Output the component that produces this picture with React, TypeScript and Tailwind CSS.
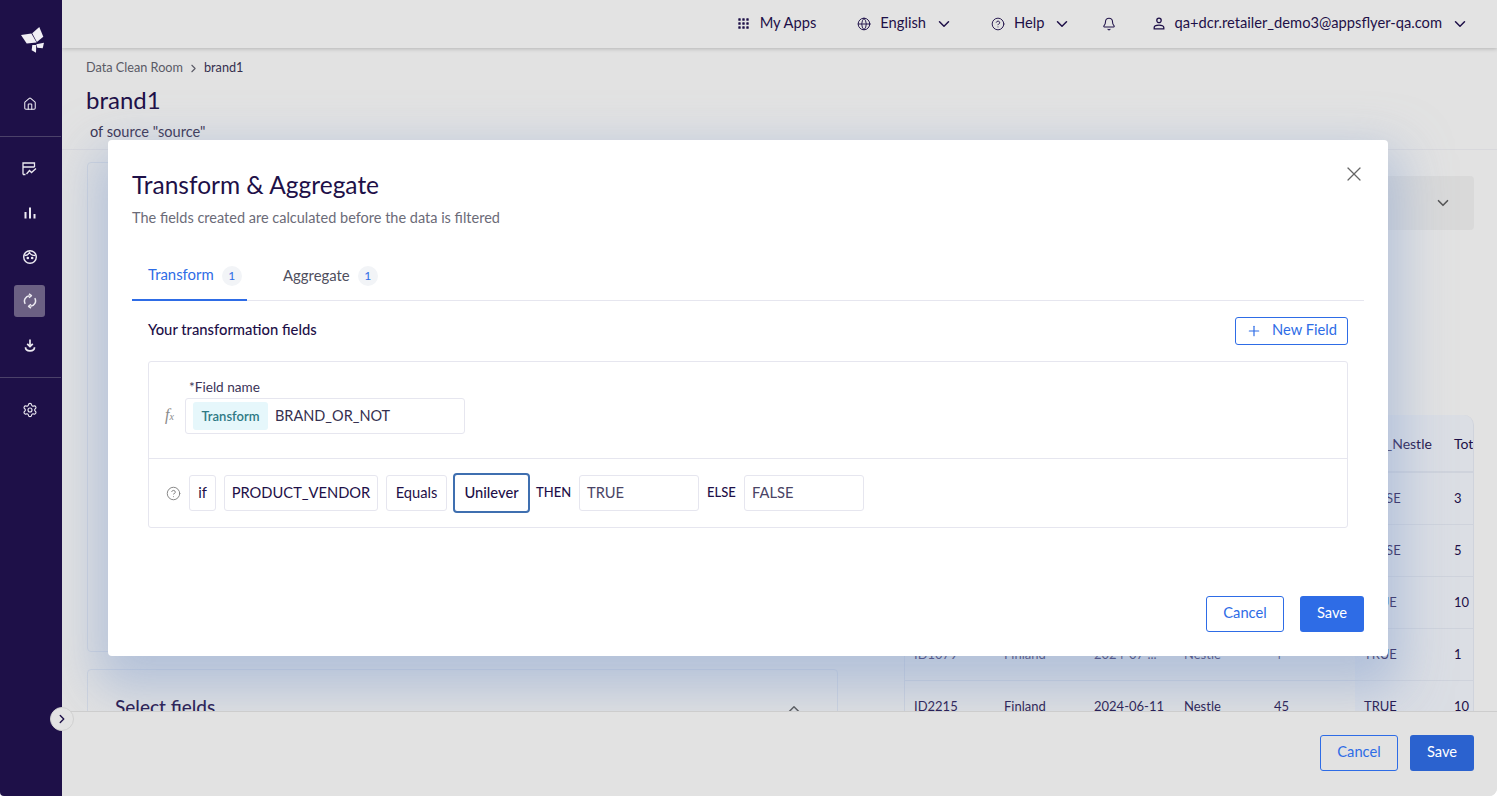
import React from "react";
import { Bell, ChevronDown, ChevronRight, ChevronUp, CircleHelp, Globe, House, Plus, Settings, X } from "lucide-react";

const font = { fontFamily: 'Lato, "Noto Sans", sans-serif' };

function Logo() {
  return (
    <svg width="24" height="27" viewBox="0 0 24 27" fill="#f1eff5">
      <path d="M0 8 L10.4 6.4 L15.6 15.4 L5.7 16.4 Z" />
      <path d="M18.3 0 L22.3 9.7 L15.9 15 L11.2 6.2 Z" />
      <path d="M15.3 17.3 L23 15.7 L21.7 21.3 L16.3 20.7 Z" />
      <path d="M11.3 18 L15.2 18 L15 25.7 L10.7 23.3 Z" />
    </svg>
  );
}

function Face() {
  return (
    <svg width="16" height="16" viewBox="0 0 16 16" fill="none" stroke="#eceaf1" strokeWidth="1.4">
      <circle cx="8" cy="8" r="6.3" />
      <path d="M2.5 6.5 C5 6.5 6.5 5.5 7.5 3.5 C8.5 5.5 11 6.5 13.5 6.5" />
      <circle cx="5.8" cy="9" r="0.6" fill="#eceaf1" />
      <circle cx="10.2" cy="9" r="0.6" fill="#eceaf1" />
    </svg>
  );
}

function Trend() {
  return (
    <svg width="15" height="14" viewBox="0 0 15 14" fill="none" stroke="#eceaf1" strokeWidth="1.3">
      <path d="M1 12.5 V1 H12.5 V5 M1 5 H12.5 M1 12.5 H3.5" />
      <path d="M4.5 12 L7.5 8.5 L9.5 10.5 L14 6.5" />
    </svg>
  );
}

function Bars() {
  return (
    <svg width="12" height="12" viewBox="0 0 12 12" fill="#eceaf1">
      <rect x="0.5" y="5" width="2" height="6.5" />
      <rect x="5" y="0.5" width="2" height="11" />
      <rect x="9.5" y="7" width="2" height="4.5" />
    </svg>
  );
}

function Sync() {
  return (
    <svg width="14" height="16" viewBox="0 0 14 16" fill="none" stroke="#eceaf1" strokeWidth="1.5">
      <path d="M2.2 10.8 A5.4 5.4 0 0 1 6.5 2.7" />
      <path d="M11.8 5.2 A5.4 5.4 0 0 1 7.5 13.3" />
      <path d="M6 0.8 L8.4 2.7 L6 4.8" strokeLinejoin="round" />
      <path d="M8 11.2 L5.6 13.3 L8 15.2" strokeLinejoin="round" />
    </svg>
  );
}

function Tray() {
  return (
    <svg width="12" height="13" viewBox="0 0 12 13" fill="none" stroke="#eceaf1" strokeWidth="1.7">
      <path d="M6 0.5 V7" />
      <path d="M3.2 4.8 L6 7.6 L8.8 4.8" />
      <path d="M1.5 8.2 C1.5 10.6 3.2 11.8 6 11.8 C8.8 11.8 10.5 10.6 10.5 8.2" />
    </svg>
  );
}

function Dots() {
  const pts = [1.5, 5.5, 9.5];
  return (
    <svg width="11" height="11" viewBox="0 0 11 11" fill="#1e1048">
      {pts.flatMap((y) => pts.map((x) => <rect key={`${x}-${y}`} x={x - 1.2} y={y - 1.2} width="2.4" height="2.4" rx="0.5" />))}
    </svg>
  );
}

function Person() {
  return (
    <svg width="12" height="13" viewBox="0 0 12 13" fill="none" stroke="#1e1048" strokeWidth="1.3">
      <circle cx="6" cy="3.4" r="2.2" />
      <path d="M1.2 11.8 V10.6 C1.2 9 3 8.2 6 8.2 C9 8.2 10.8 9 10.8 10.6 V11.8 Z" />
    </svg>
  );
}

function Fx() {
  return (
    <span className="text-[16px] italic text-[#8a8a8a] w-[13px] leading-none pb-[2px]" style={{ fontFamily: '"Liberation Serif", serif' }}>
      f<span className="text-[10px]">x</span>
    </span>
  );
}

function NavItem({ children, active }: { children: React.ReactNode; active?: boolean }) {
  return (
    <div className={`w-[31px] h-8 rounded-[3px] flex items-center justify-center ${active ? "bg-[#6b6083]" : ""}`}>{children}</div>
  );
}

function TopItem({ icon, label, chevron = true, gap = "gap-[9px]" }: { icon: React.ReactNode; label?: string; chevron?: boolean; gap?: string }) {
  return (
    <div className={`flex items-center ${gap} text-[14.7px] text-[#1e1048]`}>
      {icon}
      {label && <span className="pb-[3px]">{label}</span>}
      {chevron && <ChevronDown size={18} strokeWidth={2} />}
    </div>
  );
}

function OutlineButton({ children, bg }: { children: React.ReactNode; bg: string }) {
  return (
    <button className={`w-[78px] h-[36px] rounded-[3px] border border-[#2e6ce6] text-[#2e6ce6] text-[14.7px] pb-[3px] ${bg}`}>{children}</button>
  );
}

function Box({ children, className = "" }: { children: React.ReactNode; className?: string }) {
  return (
    <div className={`h-[36px] rounded-[3px] border border-[#e6e6ef] flex items-center text-[14.7px] text-[#1e1048] ${className}`}>{children}</div>
  );
}

function Badge() {
  return <span className="w-5 h-5 rounded-full bg-[#f2f4f7] text-[#2e6ce6] text-[12px] flex items-center justify-center">1</span>;
}

const rows = [
  ["", "", "", "", "", "FALSE", "3"],
  ["", "", "", "", "", "FALSE", "5"],
  ["", "", "", "", "", "TRUE", "10"],
  ["ID1079", "Finland", "2024-07 ...", "Nestle", "4", "TRUE", "1"],
  ["ID2215", "Finland", "2024-06-11", "Nestle", "45", "TRUE", "10"],
];

export default function App() {
  return (
    <div className="relative w-[1500px] h-[796px] overflow-hidden flex bg-white" style={font}>
      <aside className="relative z-30 w-[62px] shrink-0 bg-[#1e1048] flex flex-col rounded-bl-[4px]">
        <div className="h-[80px] pt-[27px] pl-[21px] shrink-0"><Logo /></div>
        <div className="flex flex-col w-[61px] pl-[14px] h-[57px] pt-[8px] border-b border-[#4b4169] shrink-0"><NavItem><House size={14} color="#eceaf1" strokeWidth={1.8} /></NavItem></div>
        <div className="flex flex-col w-[61px] pl-[14px] gap-[12px] pt-[16px] pb-[16px] h-[241px] border-b border-[#4b4169] shrink-0">
          <NavItem><Trend /></NavItem>
          <NavItem><Bars /></NavItem>
          <NavItem><Face /></NavItem>
          <NavItem active><Sync /></NavItem>
          <NavItem><Tray /></NavItem>
        </div>
        <div className="flex flex-col w-[61px] pl-[14px] pt-[16px]"><NavItem><Settings size={16} color="#eceaf1" strokeWidth={1.7} /></NavItem></div>
      </aside>

      <div className="relative w-[1435px] shrink-0 flex flex-col bg-[#e2e2e2] rounded-br-[8px] overflow-hidden">
        <header className="relative z-20 h-[48px] shrink-0 bg-[#e3e3e3] shadow-[0_1px_4px_rgba(0,0,0,0.2)] flex items-center justify-end pr-[28px]">
          <div className="flex items-center">
            <div className="mr-[41px]"><TopItem icon={<Dots />} label="My Apps" chevron={false} gap="gap-[11px]" /></div>
            <div className="mr-[38px]"><TopItem icon={<Globe size={14} color="#1e1048" strokeWidth={1.6} />} label="English" /></div>
            <div className="mr-[31px]"><TopItem icon={<CircleHelp size={14} color="#1e1048" strokeWidth={1.6} />} label="Help" /></div>
            <div className="mr-[37px]"><Bell size={14} color="#1e1048" strokeWidth={1.8} /></div>
            <TopItem icon={<Person />} label="qa+dcr.retailer_demo3@appsflyer-qa.com" />
          </div>
        </header>

        <section className="h-[102px] shrink-0 border-b border-[#d8d8dc] pl-[24px] pt-[11px] text-[#1e1048]">
          <div className="flex items-center text-[12.7px] h-[18px]">
            <span className="text-[#5a5a66]">Data Clean Room</span>
            <ChevronRight size={13} className="mx-[4px] text-[#5a5a66]" />
            <span className="text-[#36304f]">brand1</span>
          </div>
          <h1 className="text-[24px] leading-[30px] mt-[8px] font-normal">brand1</h1>
          <p className="text-[14.6px] leading-[18px] mt-[8px] ml-[4px] text-[#36304f]">of source "source"</p>
        </section>

        <main className="relative flex-1 min-h-0 flex pl-[25px] pr-[23px] pt-[12px] gap-[66px]">
          <div className="w-[751px] shrink-0 flex flex-col gap-[17px]">
            <div className="h-[490px] shrink-0 rounded-[4px] border border-[#cfd4de]" />
            <div className="rounded-[4px] border border-[#cfd4de] flex-1 flex items-start justify-between pl-[27px] pr-[34px] pt-[25px]">
              <span className="text-[19px] leading-[24px] font-medium text-[#1e1048]">Select fields</span>
              <ChevronUp size={18} className="mt-[5px] text-[#555]" />
            </div>
          </div>
          <div className="flex-1 min-w-0 flex flex-col">
            <div className="h-[54px] mt-[14px] rounded-[4px] bg-[#d9d9d9] flex items-center justify-end pr-[22px] shrink-0">
              <ChevronDown size={18} className="text-[#555]" strokeWidth={2.2} />
            </div>
            <div className="mt-[185px] rounded-t-[10px] border-x border-[#cfd3dc] overflow-hidden flex-1 text-[13px] text-[#1e1048]">
              {[["", "", "", "", "", "Is_Nestle", "Total"] as string[]].map((r) => (
                <div key="head" className="h-[58px] grid grid-cols-[90px_90px_90px_90px_90px_90px_30px] items-center border-b-2 border-[#cfd3dc] overflow-hidden">
                  {r.map((c, i) => <span key={i} className={`whitespace-nowrap h-full flex items-center text-[14px] ${i === 5 ? "pl-[21px] bg-[#d4dae6]/50" : i === 6 ? "pl-[9px] bg-[#d4dae6]/50" : ""}`}>{c}</span>)}
                </div>
              ))}
              {rows.map((r) => (
                <div key={r[0] + r[5] + r[6]} className="h-[52px] grid grid-cols-[90px_90px_90px_90px_90px_90px_30px] items-center border-b border-[#cfd3dc]">
                  {r.map((c, i) => <span key={i} className={`whitespace-nowrap h-full flex items-center pl-[9px] ${i > 4 ? "bg-[#d4dae6]/50" : ""}`}>{c}</span>)}
                </div>
              ))}
            </div>
          </div>
        </main>

        <footer className="relative z-20 h-[85px] shrink-0 bg-[#e2e2e2] border-t border-[#cdcdcd] flex items-start justify-end pt-[23px] pr-[23px] gap-[12px]">
          <OutlineButton bg="bg-transparent">Cancel</OutlineButton>
          <button className="w-[64px] h-[36px] rounded-[3px] bg-[#2b62cf] text-white text-[14.7px] pb-[3px]">Save</button>
        </footer>
      </div>

      <button className="absolute z-40 left-[50px] top-[707px] w-[24px] h-[24px] rounded-full bg-[#e3e3e3] border border-[#d0d0d0] flex items-center justify-center">
        <ChevronRight size={14} color="#1e1048" strokeWidth={2.4} />
      </button>

      <div className="absolute z-10 left-[108px] top-[140px] w-[1280px] h-[516px] rounded-[4px] bg-white shadow-[0_22px_50px_12px_rgba(140,165,210,0.55)] px-[24px] pt-[29px] flex flex-col text-[#1e1048]">
        <button className="absolute right-[22px] top-[22px] text-[#666]"><X size={24} strokeWidth={1.2} /></button>
        <h2 className="text-[24.5px] leading-[32px] font-normal">Transform &amp; Aggregate</h2>
        <p className="text-[14.5px] leading-[20px] mt-[6px] pt-[1px] h-[21px] text-[#6b6b78]">The fields created are calculated before the data is filtered</p>

        <div className="flex mt-[24px] h-[49px] border-b border-[#e6e6ef] shrink-0">
          <div className="flex items-center gap-[8px] w-[115px] pl-[16px] border-b-2 border-[#2e6ce6] h-[49px] text-[14.9px] text-[#2e6ce6]"><span className="pb-[2px]">Transform</span> <Badge /></div>
          <div className="flex items-center gap-[8px] pl-[36px] text-[14.9px] text-[#4f4f5e]"><span className="pb-[2px]">Aggregate</span> <Badge /></div>
        </div>

        <div className="mx-[16px] flex items-center justify-between mt-[16px] h-[28px] shrink-0">
          <span className="text-[14.8px] font-medium pb-[3px]">Your transformation fields</span>
          <button className="w-[113px] h-[28px] rounded-[3px] border border-[#2e6ce6] text-[#2e6ce6] text-[14.7px] flex items-center justify-center gap-[10px]"><Plus size={16} strokeWidth={1.8} /><span className="pb-[3px]">New Field</span></button>
        </div>

        <div className="mx-[16px] mt-[16px] h-[167px] shrink-0 rounded-[3px] border border-[#e6e6ef] flex flex-col">
          <div className="h-[97px] shrink-0 border-b border-[#e6e6ef] pl-[16px] flex items-end pb-[24px] gap-[7px]">
            <div className="h-[36px] flex items-center"><Fx /></div>
            <div className="flex flex-col">
              <label className="text-[13.6px] leading-[16px] pl-[4px] mb-[3px] text-[#3b3458]">*Field name</label>
              <Box className="w-[280px] pl-[7px] gap-[7px]">
                <span className="h-[28px] w-[75px] rounded-[3px] bg-[#e6f7fb] text-[#2f7a85] text-[13px] font-semibold flex items-center justify-center pt-[1px]">Transform</span>
                <span className="text-[14.5px] text-[#36304f] pb-[1px]">BRAND_OR_NOT</span>
              </Box>
            </div>
          </div>
          <div className="flex-1 flex items-center pl-[17px] text-[14.7px]">
            <CircleHelp size={15} color="#808080" strokeWidth={1.5} className="mr-[8px]" />
            <Box className="w-[27px] justify-center mr-[8px] pb-[2px]">if</Box>
            <Box className="w-[154px] justify-center mr-[8px] pb-[2px] text-[14.4px]">PRODUCT_VENDOR</Box>
            <Box className="w-[61px] justify-center mr-[6px] pb-[2px]">Equals</Box>
            <div className="w-[77px] h-[40px] rounded-[4px] border-2 border-[#3f6fb0] flex items-center justify-center mr-[6px] font-medium pb-[2px]">Unilever</div>
            <span className="text-[13px] font-medium w-[43px]">THEN</span>
            <Box className="w-[120px] pl-[7px] pb-[2px] text-[#4a4466] mr-[8px]">TRUE</Box>
            <span className="text-[13px] font-medium w-[37px]">ELSE</span>
            <Box className="w-[120px] pl-[7px] pb-[2px] text-[#4a4466]">FALSE</Box>
          </div>
        </div>

        <div className="flex justify-end gap-[16px] mt-[68px]">
          <OutlineButton bg="bg-white">Cancel</OutlineButton>
          <button className="w-[64px] h-[36px] rounded-[3px] bg-[#2e6ce6] text-white text-[14.7px] pb-[3px]">Save</button>
        </div>
      </div>
    </div>
  );
}
